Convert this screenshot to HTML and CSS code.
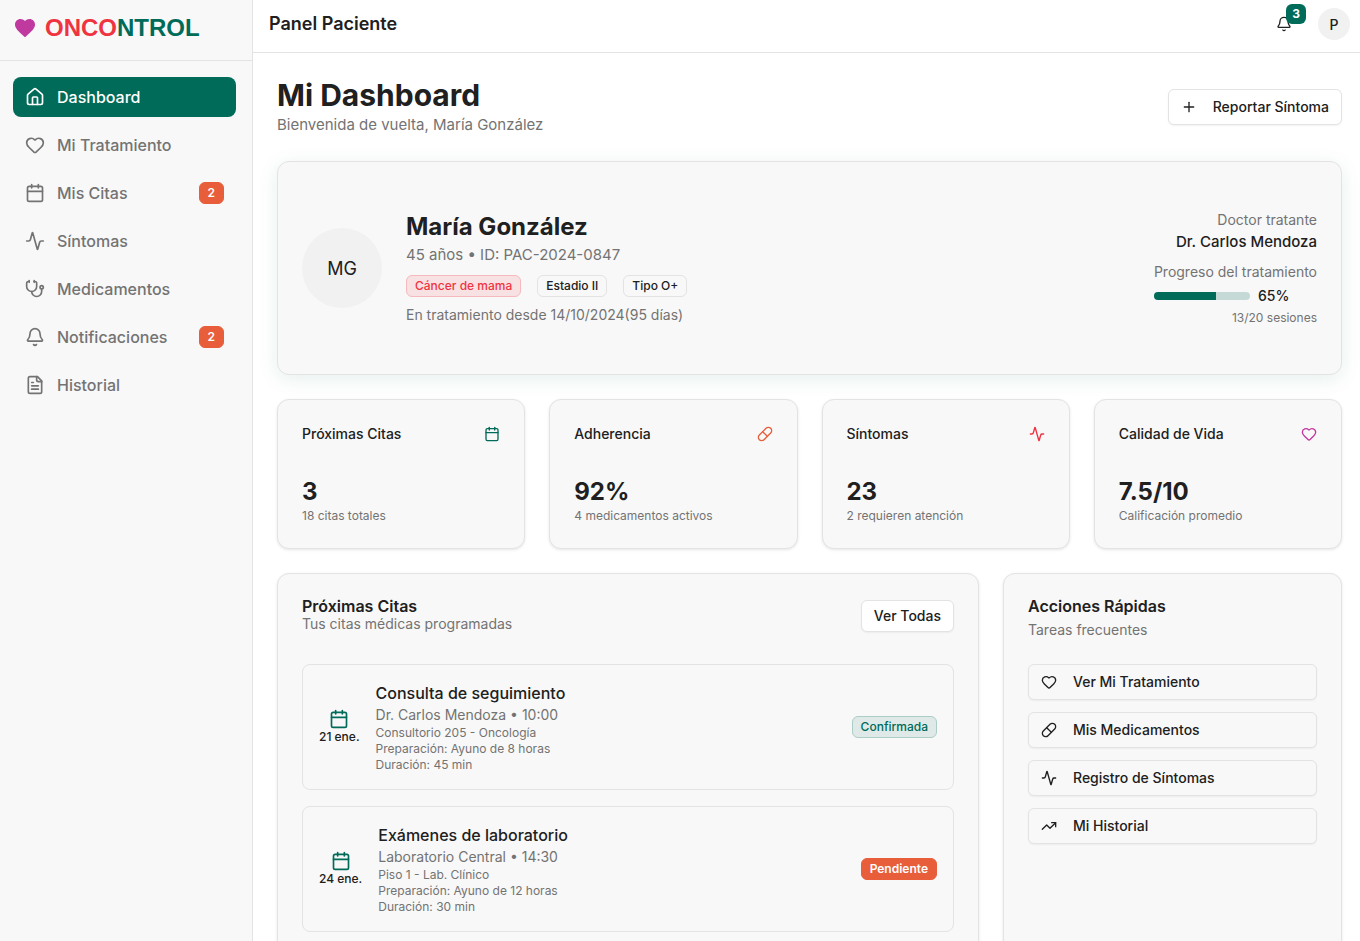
FILE: index.html
```html
<!DOCTYPE html>
<html lang="es">
<head>
<meta charset="utf-8">
<meta name="viewport" content="width=device-width, initial-scale=1">
<title>Oncontrol - Panel Paciente</title>
<link rel="stylesheet" href="styles.css">
</head>
<body>
<svg class="sprite" aria-hidden="true">
  <symbol id="i-brand" viewBox="0 0 24 24"><path d="M12 21.350l-1.450-1.320C5.400 15.360 2 12.280 2 8.500 2 5.420 4.420 3 7.500 3c1.740 0 3.410.810 4.500 2.090C13.090 3.810 14.760 3 16.500 3 19.580 3 22 5.420 22 8.500c0 3.780-3.400 6.860-8.550 11.540L12 21.350z"/></symbol>
  <symbol id="i-home" viewBox="0 0 24 24"><path d="M15 21v-8a1 1 0 0 0-1-1h-4a1 1 0 0 0-1 1v8"/><path d="M3 10a2 2 0 0 1 .709-1.528l7-5.999a2 2 0 0 1 2.582 0l7 5.999A2 2 0 0 1 21 10v9a2 2 0 0 1-2 2H5a2 2 0 0 1-2-2z"/></symbol>
  <symbol id="i-heart" viewBox="0 0 24 24"><path d="M2 9.5a5.5 5.5 0 0 1 9.591-3.676.56.56 0 0 0 .818 0A5.49 5.49 0 0 1 22 9.5c0 2.29-1.5 4-3 5.5l-5.492 5.313a2 2 0 0 1-3 .019L5 15c-1.500-1.500-3-3.200-3-5.500"/></symbol>
  <symbol id="i-calendar" viewBox="0 0 24 24"><path d="M8 2v4"/><path d="M16 2v4"/><rect width="18" height="18" x="3" y="4" rx="2"/><path d="M3 10h18"/></symbol>
  <symbol id="i-activity" viewBox="0 0 24 24"><path d="M22 12h-2.480a2 2 0 0 0-1.930 1.460l-2.350 8.360a.25.25 0 0 1-.480 0L9.240 2.180a.25.25 0 0 0-.480 0l-2.350 8.360A2 2 0 0 1 4.490 12H2"/></symbol>
  <symbol id="i-stethoscope" viewBox="0 0 24 24"><path d="M11 2v2"/><path d="M5 2v2"/><path d="M5 3H4a2 2 0 0 0-2 2v4a6 6 0 0 0 12 0V5a2 2 0 0 0-2-2h-1"/><path d="M8 15a6 6 0 0 0 12 0v-3"/><circle cx="20" cy="10" r="2"/></symbol>
  <symbol id="i-bell" viewBox="0 0 24 24"><path d="M10.268 21a2 2 0 0 0 3.464 0"/><path d="M3.262 15.326A1 1 0 0 0 4 17h16a1 1 0 0 0 .740-1.673C19.410 13.956 18 12.499 18 8A6 6 0 0 0 6 8c0 4.499-1.411 5.956-2.738 7.326"/></symbol>
  <symbol id="i-file" viewBox="0 0 24 24"><path d="M15 2H6a2 2 0 0 0-2 2v16a2 2 0 0 0 2 2h12a2 2 0 0 0 2-2V7Z"/><path d="M14 2v4a2 2 0 0 0 2 2h4"/><path d="M10 9H8"/><path d="M16 13H8"/><path d="M16 17H8"/></symbol>
  <symbol id="i-plus" viewBox="0 0 24 24"><path d="M5 12h14"/><path d="M12 5v14"/></symbol>
  <symbol id="i-pill" viewBox="0 0 24 24"><path d="m10.500 20.500 10-10a4.950 4.950 0 1 0-7-7l-10 10a4.950 4.950 0 1 0 7 7Z"/><path d="m8.500 8.500 7 7"/></symbol>
  <symbol id="i-trend" viewBox="0 0 24 24"><path d="M16 7h6v6"/><path d="m22 7-8.500 8.500-5-5L2 17"/></symbol>
</svg>

<div class="app">
  <aside class="sidebar">
    <div class="brand">
      <svg class="brand-heart"><use href="#i-brand"/></svg>
      <span class="brand-name"><span class="brand-onco">ONCO</span><span class="brand-ntrol">NTROL</span></span>
    </div>
    <nav class="nav" aria-label="Principal">
      <a class="nav-item active" href="#dashboard" aria-current="page"><svg class="icon icon-md"><use href="#i-home"/></svg>Dashboard</a>
      <a class="nav-item" href="#tratamiento"><svg class="icon icon-md"><use href="#i-heart"/></svg>Mi Tratamiento</a>
      <a class="nav-item" href="#citas"><svg class="icon icon-md"><use href="#i-calendar"/></svg>Mis Citas<span class="badge badge-accent nav-count">2</span></a>
      <a class="nav-item" href="#sintomas"><svg class="icon icon-md"><use href="#i-activity"/></svg>Síntomas</a>
      <a class="nav-item" href="#medicamentos"><svg class="icon icon-md"><use href="#i-stethoscope"/></svg>Medicamentos</a>
      <a class="nav-item" href="#notificaciones"><svg class="icon icon-md"><use href="#i-bell"/></svg>Notificaciones<span class="badge badge-accent nav-count">2</span></a>
      <a class="nav-item" href="#historial"><svg class="icon icon-md"><use href="#i-file"/></svg>Historial</a>
    </nav>
  </aside>

  <div class="page">
    <header class="topbar">
      <h2 class="topbar-title">Panel Paciente</h2>
      <div class="topbar-actions">
        <button class="bell" type="button" aria-label="Notificaciones"><svg class="icon icon-sm"><use href="#i-bell"/></svg><span class="bell-count">3</span></button>
        <button class="user" type="button" aria-label="Perfil">P</button>
      </div>
    </header>

    <main class="content">
      <div class="page-head">
        <div>
          <h1 class="page-title">Mi Dashboard</h1>
          <p class="text-lead muted">Bienvenida de vuelta, María González</p>
        </div>
        <button class="btn" type="button"><svg class="icon icon-sm"><use href="#i-plus"/></svg>Reportar Síntoma</button>
      </div>

      <section class="card profile">
        <div class="avatar">MG</div>
        <div class="profile-info">
          <h2 class="profile-name">María González</h2>
          <p class="text-lead muted">45 años • ID: PAC-2024-0847</p>
          <div class="tags">
            <span class="badge badge-danger">Cáncer de mama</span>
            <span class="badge">Estadio II</span>
            <span class="badge">Tipo O+</span>
          </div>
          <p class="text-sm muted">En tratamiento desde 14/10/2024(95 días)</p>
        </div>
        <div class="doctor">
          <p class="text-sm muted">Doctor tratante</p>
          <p class="text-lead strong">Dr. Carlos Mendoza</p>
          <p class="text-sm muted doctor-progress">Progreso del tratamiento</p>
          <div class="progress">
            <div class="track"><div class="fill" style="width:65%"></div></div>
            <span class="text-sm strong">65%</span>
          </div>
          <p class="text-xs muted">13/20 sesiones</p>
        </div>
      </section>

      <section class="stats">
        <article class="card stat">
          <div class="stat-head"><h3 class="text-sm strong">Próximas Citas</h3><svg class="icon icon-sm green"><use href="#i-calendar"/></svg></div>
          <p class="stat-value">3</p><p class="text-xs muted">18 citas totales</p>
        </article>
        <article class="card stat">
          <div class="stat-head"><h3 class="text-sm strong">Adherencia</h3><svg class="icon icon-sm orange"><use href="#i-pill"/></svg></div>
          <p class="stat-value">92%</p><p class="text-xs muted">4 medicamentos activos</p>
        </article>
        <article class="card stat">
          <div class="stat-head"><h3 class="text-sm strong">Síntomas</h3><svg class="icon icon-sm red"><use href="#i-activity"/></svg></div>
          <p class="stat-value">23</p><p class="text-xs muted">2 requieren atención</p>
        </article>
        <article class="card stat">
          <div class="stat-head"><h3 class="text-sm strong">Calidad de Vida</h3><svg class="icon icon-sm magenta"><use href="#i-heart"/></svg></div>
          <p class="stat-value">7.5/10</p><p class="text-xs muted">Calificación promedio</p>
        </article>
      </section>

      <div class="panels">
        <section class="card panel panel-wide">
          <div class="panel-head">
            <div>
              <h3 class="panel-title">Próximas Citas</h3>
              <p class="text-sm muted">Tus citas médicas programadas</p>
            </div>
            <button class="btn btn-small" type="button">Ver Todas</button>
          </div>
          <div class="visits">
            <article class="visit">
              <div class="visit-date"><svg class="icon icon-md green"><use href="#i-calendar"/></svg><span class="text-xs strong">21 ene.</span></div>
              <div class="visit-info">
                <h4 class="text-base strong">Consulta de seguimiento</h4>
                <p class="text-sm muted">Dr. Carlos Mendoza • 10:00</p>
                <p class="text-xs muted">Consultorio 205 - Oncología</p>
                <p class="text-xs muted">Preparación: Ayuno de 8 horas</p>
                <p class="text-xs muted">Duración: 45 min</p>
              </div>
              <span class="badge badge-success">Confirmada</span>
            </article>
            <article class="visit">
              <div class="visit-date"><svg class="icon icon-md green"><use href="#i-calendar"/></svg><span class="text-xs strong">24 ene.</span></div>
              <div class="visit-info">
                <h4 class="text-base strong">Exámenes de laboratorio</h4>
                <p class="text-sm muted">Laboratorio Central • 14:30</p>
                <p class="text-xs muted">Piso 1 - Lab. Clínico</p>
                <p class="text-xs muted">Preparación: Ayuno de 12 horas</p>
                <p class="text-xs muted">Duración: 30 min</p>
              </div>
              <span class="badge badge-accent">Pendiente</span>
            </article>
          </div>
        </section>

        <section class="card panel">
          <h3 class="panel-title">Acciones Rápidas</h3>
          <p class="text-sm muted panel-note">Tareas frecuentes</p>
          <div class="actions">
            <button class="btn action" type="button"><svg class="icon icon-sm"><use href="#i-heart"/></svg>Ver Mi Tratamiento</button>
            <button class="btn action" type="button"><svg class="icon icon-sm"><use href="#i-pill"/></svg>Mis Medicamentos</button>
            <button class="btn action" type="button"><svg class="icon icon-sm"><use href="#i-activity"/></svg>Registro de Síntomas</button>
            <button class="btn action" type="button"><svg class="icon icon-sm"><use href="#i-trend"/></svg>Mi Historial</button>
          </div>
        </section>
      </div>
    </main>
  </div>
</div>
</body>
</html>
```

FILE: styles.css
```css
:root {
  --green: #006b58;
  --orange: #e85d3a;
  --red: #ef3340;
  --magenta: #c0399f;
  --ink: #202020;
  --muted: #737373;
  --line: #e3e3e3;
  --surface: #f8f8f8;
}

* { box-sizing: border-box; }

body {
  margin: 0;
  background: #fff;
  color: var(--ink);
  font-family: Inter, "Liberation Sans", sans-serif;
}

h1, h2, h3, h4, p { margin: 0; }

button {
  font-family: inherit;
  color: inherit;
  cursor: pointer;
}

.sprite { position: absolute; width: 0; height: 0; }

.icon {
  flex: none;
  fill: none;
  stroke: currentColor;
  stroke-width: 2;
  stroke-linecap: round;
  stroke-linejoin: round;
}
.icon-sm { width: 16px; height: 16px; }
.icon-md { width: 20px; height: 20px; }

.green { color: var(--green); }
.orange { color: var(--orange); }
.red { color: var(--red); }
.magenta { color: var(--magenta); }

.text-base { font-size: 16px; line-height: 24px; font-weight: 400; }
.text-lead { font-size: 15px; line-height: 24px; font-weight: 400; }
.text-sm { font-size: 14px; line-height: 20px; font-weight: 400; }
.text-xs { font-size: 12px; line-height: 16px; font-weight: 400; }
.muted { color: var(--muted); }
.strong { font-weight: 500; }

.app { display: flex; height: 100vh; }

.sidebar {
  flex: none;
  width: 253px;
  background: var(--surface);
  border-right: 1px solid var(--line);
}

.brand {
  display: flex;
  align-items: center;
  gap: 8px;
  padding: 12px 13px 16px;
  border-bottom: 1px solid var(--line);
}
.brand-heart {
  flex: none;
  width: 24px;
  height: 24px;
  fill: var(--magenta);
}
.brand-name {
  font-family: "Liberation Sans", Arial, sans-serif;
  font-size: 24px;
  line-height: 32px;
  font-weight: 700;
}
.brand-onco { color: var(--red); }
.brand-ntrol { color: var(--green); }

.nav {
  display: flex;
  flex-direction: column;
  gap: 8px;
  padding: 16px 16px 16px 13px;
}
.nav-item {
  display: flex;
  align-items: center;
  gap: 12px;
  padding: 8px 12px;
  border-radius: 8px;
  color: var(--muted);
  font-size: 16px;
  line-height: 24px;
  font-weight: 500;
  text-decoration: none;
}
.nav-item.active { background: var(--green); color: #fff; }
.nav-count { margin-left: auto; }

.badge {
  display: inline-block;
  padding: 2px 8px;
  border: 1px solid var(--line);
  border-radius: 6px;
  font-size: 12px;
  line-height: 16px;
  font-weight: 500;
  white-space: nowrap;
}
.badge-accent {
  background: var(--orange);
  border-color: var(--orange);
  color: #fff;
  font-weight: 600;
}
.badge-danger { background: #f7e1e2; border-color: #f6babe; color: var(--red); }
.badge-success { background: #dfe9e7; border-color: #abcdc6; color: var(--green); }

.page {
  flex: 1;
  min-width: 0;
  display: flex;
  flex-direction: column;
}

.topbar {
  flex: none;
  display: flex;
  align-items: center;
  justify-content: space-between;
  padding: 4px 10px 8px 16px;
  border-bottom: 1px solid var(--line);
}
.topbar-title { font-size: 18px; line-height: 28px; font-weight: 600; }
.topbar-actions { display: flex; align-items: center; gap: 16px; }

.bell {
  position: relative;
  display: grid;
  place-items: center;
  width: 36px;
  height: 40px;
  padding: 0;
  border: 0;
  background: none;
}
.bell-count {
  position: absolute;
  top: 0;
  right: -4px;
  width: 20px;
  border-radius: 6px;
  background: var(--green);
  color: #fff;
  font-size: 12px;
  line-height: 20px;
  font-weight: 700;
}
.user {
  width: 32px;
  height: 32px;
  padding: 0;
  border: 0;
  border-radius: 50%;
  background: #f1f1f1;
  font-size: 14px;
  font-weight: 500;
}

.content {
  flex: 1;
  min-height: 0;
  display: flex;
  flex-direction: column;
  gap: 24px;
  padding: 24px 18px 24px 24px;
  overflow-y: auto;
  scrollbar-width: none;
}
.content > * { flex: none; }

.page-head {
  display: flex;
  align-items: center;
  justify-content: space-between;
}
.page-title { font-size: 30px; line-height: 36px; font-weight: 700; }

.btn {
  display: inline-flex;
  align-items: center;
  gap: 16px;
  padding: 7px 12px;
  border: 1px solid var(--line);
  border-radius: 6px;
  background: #fff;
  box-shadow: 0 1px 2px rgba(0, 0, 0, 0.05);
  font-size: 14px;
  line-height: 20px;
  font-weight: 500;
}
.btn-small { padding: 5px 12px; }

.card {
  background: var(--surface);
  border: 1px solid var(--line);
  border-radius: 12px;
  box-shadow: 0 1px 3px rgba(0, 0, 0, 0.1);
}

.profile {
  display: flex;
  align-items: center;
  gap: 24px;
  padding: 48px 24px;
  box-shadow: 0 4px 20px rgba(0, 107, 88, 0.1);
}
.avatar {
  display: grid;
  place-items: center;
  width: 80px;
  height: 80px;
  border-radius: 50%;
  background: #f1f1f1;
  font-size: 18px;
}
.profile-info { flex: 1; }
.profile-name { font-size: 24px; line-height: 32px; font-weight: 700; }
.tags { display: flex; gap: 16px; margin: 8px 0; }

.doctor { text-align: right; }
.doctor-progress { margin-top: 8px; }
.progress {
  display: flex;
  align-items: center;
  gap: 8px;
  margin: 4px 0;
}
.track {
  width: 96px;
  height: 8px;
  border-radius: 4px;
  background: #c5dad6;
  overflow: hidden;
}
.fill { height: 100%; background: var(--green); }

.stats {
  display: grid;
  grid-template-columns: repeat(4, 1fr);
  gap: 24px;
}
.stat { padding: 24px; }
.stat-head {
  display: flex;
  align-items: center;
  justify-content: space-between;
  margin-bottom: 32px;
}
.stat-value { font-size: 24px; line-height: 32px; font-weight: 700; }

.panels {
  display: grid;
  grid-template-columns: repeat(3, 1fr);
  gap: 24px;
}
.panel { padding: 24px; }
.panel-wide { grid-column: span 2; }
.panel-head {
  display: flex;
  align-items: center;
  justify-content: space-between;
  margin-bottom: 30px;
}
.panel-title { font-size: 16px; line-height: 16px; font-weight: 600; }
.panel-note { margin: 6px 0 24px; }

.visits { display: flex; flex-direction: column; gap: 16px; }
.visit {
  display: flex;
  align-items: center;
  gap: 16px;
  padding: 16px;
  border: 1px solid var(--line);
  border-radius: 8px;
}
.visit-date {
  display: flex;
  flex-direction: column;
  align-items: center;
}
.visit-info { flex: 1; }

.actions { display: flex; flex-direction: column; gap: 12px; }
.action { background: var(--surface); }
```
